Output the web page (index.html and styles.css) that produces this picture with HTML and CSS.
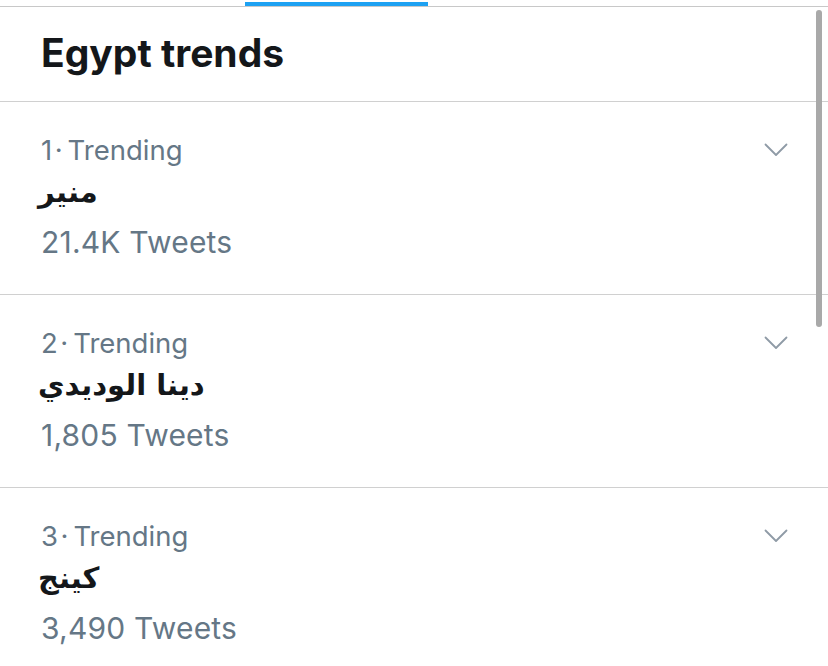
FILE: index.html
```html
<!DOCTYPE html>
<html lang="en">
<head>
<meta charset="utf-8">
<link rel="stylesheet" href="styles.css">
</head>
<body>
<div class="page">
  <div class="tabs"><div class="tab-indicator"></div></div>
  <div class="header"><h1 class="title">Egypt trends</h1></div>
  <div class="trend">
    <div class="trend-text">
      <div class="meta">1&#8202;·&#8201;Trending</div>
      <div class="name" dir="rtl">منير</div>
      <div class="count">21.4K Tweets</div>
    </div>
    <svg class="chevron" viewBox="0 0 24 14" width="24" height="14"><path d="M1.5 1.5 L12 12 L22.5 1.5" fill="none" stroke="#8f9ba6" stroke-width="1.8" stroke-linecap="round" stroke-linejoin="round"/></svg>
  </div>
  <div class="trend">
    <div class="trend-text">
      <div class="meta">2&#8202;·&#8201;Trending</div>
      <div class="name" dir="rtl">دينا الوديدي</div>
      <div class="count">1,805 Tweets</div>
    </div>
    <svg class="chevron" viewBox="0 0 24 14" width="24" height="14"><path d="M1.5 1.5 L12 12 L22.5 1.5" fill="none" stroke="#8f9ba6" stroke-width="1.8" stroke-linecap="round" stroke-linejoin="round"/></svg>
  </div>
  <div class="trend">
    <div class="trend-text">
      <div class="meta">3&#8202;·&#8201;Trending</div>
      <div class="name" dir="rtl">كينج</div>
      <div class="count">3,490 Tweets</div>
    </div>
    <svg class="chevron" viewBox="0 0 24 14" width="24" height="14"><path d="M1.5 1.5 L12 12 L22.5 1.5" fill="none" stroke="#8f9ba6" stroke-width="1.8" stroke-linecap="round" stroke-linejoin="round"/></svg>
  </div>
  <div class="scrollbar"></div>
</div>
</body>
</html>
```
FILE: styles.css
```css
html, body {
  margin: 0;
  padding: 0;
  background: #ffffff;
}
.page {
  position: relative;
  width: 828px;
  height: 666px;
  overflow: hidden;
  font-family: Inter, "Liberation Sans", Arial, sans-serif;
}
.tabs {
  height: 7px;
  box-sizing: border-box;
  padding-top: 2px;
  border-bottom: 1px solid #c8c8c8;
}
.tab-indicator {
  margin-left: 245px;
  width: 183px;
  height: 4px;
  background: #1da1f2;
}
.header {
  height: 95px;
  box-sizing: border-box;
  display: flex;
  align-items: center;
  padding-left: 41px;
  border-bottom: 1px solid #d0d0d0;
}
.title {
  margin: 0;
  font-size: 39px;
  font-weight: 700;
  color: #14171a;
  letter-spacing: 0;
  line-height: 1;
  padding-bottom: 4px;
}
.trend {
  height: 193px;
  box-sizing: border-box;
  border-bottom: 1px solid #d0d0d0;
  display: flex;
  justify-content: space-between;
  align-items: flex-start;
  padding: 31px 40px 0 41px;
}
.trend-text {
  display: flex;
  flex-direction: column;
}
.meta {
  font-size: 27.5px;
  color: #657786;
  line-height: 34px;
}
.name {
  align-self: flex-start;
  font-family: "DejaVu Sans", sans-serif;
  font-weight: 700;
  font-size: 29px;
  color: #14171a;
  line-height: 50px;
  margin-left: -3px;
}
.count {
  font-size: 30px;
  letter-spacing: 0.2px;
  color: #657786;
  line-height: 34px;
  margin-top: 8px;
}
.chevron {
  margin-top: 10px;
}
.scrollbar {
  position: absolute;
  left: 816px;
  top: 10px;
  width: 6px;
  height: 317px;
  border-radius: 3px;
  background: #a9a9a9;
}
```
